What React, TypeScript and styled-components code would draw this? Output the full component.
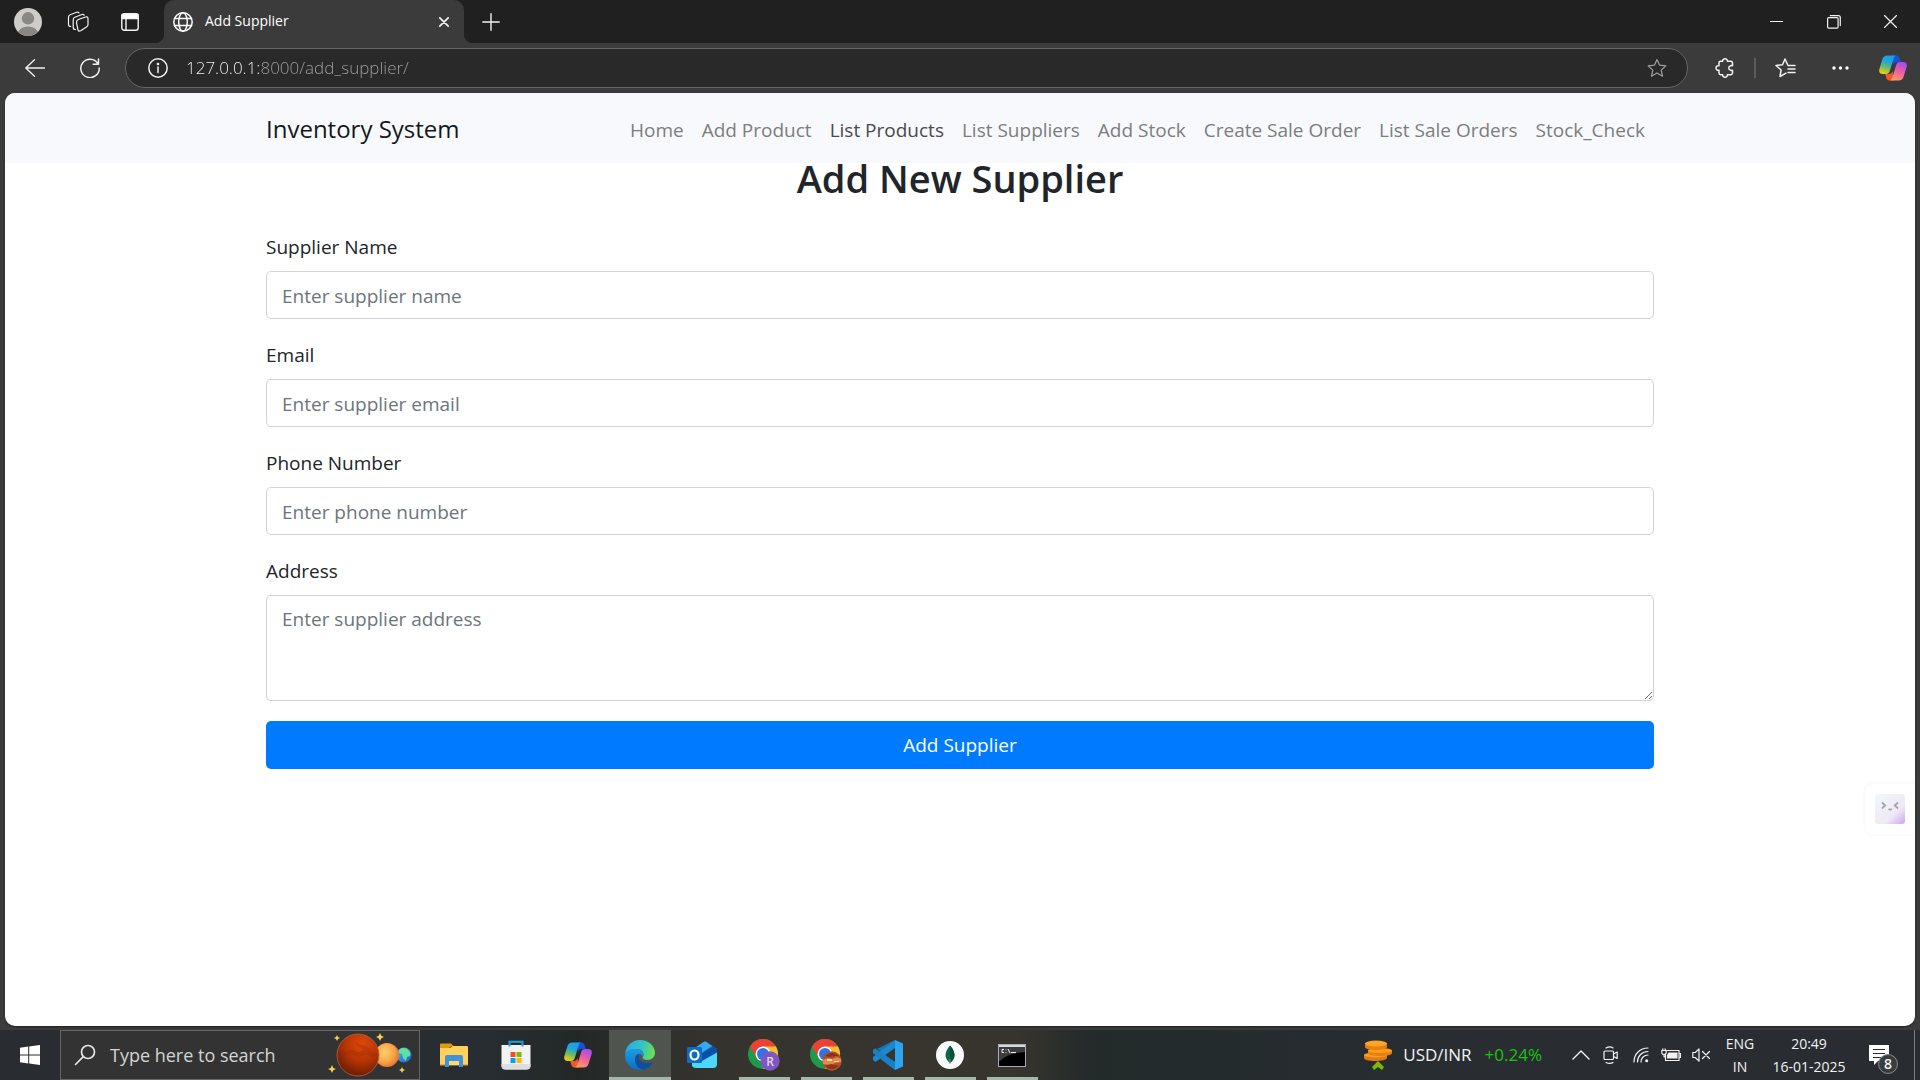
import React from "react";
import styled, { createGlobalStyle, css } from "styled-components";

const GlobalStyle = createGlobalStyle`
  *, *::before, *::after { box-sizing: border-box; }
  body {
    margin: 0;
    background: #3b3b3b;
    font-family: "Open Sans", "Noto Sans", sans-serif;
  }
  button, input, textarea { font-family: inherit; }
`;

/* ---------- window shell ---------- */

const Desktop = styled.div`
  min-height: 100vh;
  display: flex;
  flex-direction: column;
`;

const iconButton = css`
  display: inline-flex;
  align-items: center;
  justify-content: center;
  flex: none;
  padding: 0;
  border: 0;
  background: transparent;
  color: #f2f2f2;
  cursor: pointer;
  svg { display: block; }
`;

const TitleBar = styled.header`
  display: flex;
  align-items: stretch;
  height: 43px;
  background: #202020;
`;

const TitleButton = styled.button<{ $width: number; $after?: number }>`
  ${iconButton}
  width: ${(p) => p.$width}px;
  margin-right: ${(p) => p.$after ?? 0}px;
`;

const Tab = styled.div`
  position: relative;
  display: flex;
  align-items: center;
  width: 300px;
  padding: 0 10px 0 9px;
  border-radius: 10px 10px 0 0;
  background: #3b3b3b;
  color: #fff;
  &::before, &::after {
    content: "";
    position: absolute;
    bottom: 0;
    width: 10px;
    height: 10px;
  }
  &::before {
    left: -10px;
    background: radial-gradient(circle at 0 0, #202020 10px, #3b3b3b 11px);
  }
  &::after {
    right: -10px;
    background: radial-gradient(circle at 100% 0, #202020 10px, #3b3b3b 11px);
  }
`;

const TabTitle = styled.span`
  flex: 1;
  padding: 0 0 2px 12px;
  font-size: 14px;
  line-height: 20px;
`;

const TabClose = styled.button`
  ${iconButton}
  width: 20px;
  height: 20px;
`;

const NewTab = styled.button`
  ${iconButton}
  width: 44px;
  margin-left: 5px;
`;

const WindowControls = styled.div`
  display: flex;
  margin-left: auto;
  padding-right: 1px;
`;

const Toolbar = styled.div`
  display: flex;
  align-items: center;
  height: 50px;
  padding: 0 5px 0 13px;
`;

const ToolButton = styled.button<{ $after?: number }>`
  ${iconButton}
  width: 44px;
  height: 40px;
  margin-right: ${(p) => p.$after ?? 0}px;
`;

const AddressBar = styled.div`
  display: flex;
  flex: 1;
  align-items: center;
  height: 40px;
  margin-right: 15px;
  padding: 0 8px 0 10px;
  border: 1px solid #666;
  border-radius: 20px;
  background: #292929;
`;

const AddressInput = styled.input`
  flex: 1;
  min-width: 0;
  height: 30px;
  padding: 0 0 2px;
  border: 0;
  outline: 0;
  font-size: 17px;
  font-weight: 300;
  color: #a3a3a3;
  background: linear-gradient(90deg, #fff 73px, #a3a3a3 73px);
  background-clip: text;
  -webkit-background-clip: text;
  -webkit-text-fill-color: transparent;
`;

const ToolDivider = styled.span`
  width: 2px;
  height: 20px;
  margin: 0 7px;
  background: #5c5c5c;
`;

/* ---------- web page ---------- */

const Page = styled.div`
  position: relative;
  flex: 1;
  margin: 0 5px 4px;
  border-radius: 10px;
  overflow: hidden;
  background: #fff;
  box-shadow: 0 1px 2px rgba(0, 0, 0, 0.5);
`;

const Navbar = styled.nav`
  background: #f8f9fc;
`;

const Container = styled.div`
  width: 100%;
  max-width: 1428px;
  margin: 0 auto;
  padding: 0 20px;
`;

const NavInner = styled(Container)`
  display: flex;
  align-items: center;
  justify-content: space-between;
  min-height: 70px;
`;

const Brand = styled.a`
  padding-top: 2px;
  font-size: 24px;
  line-height: 36px;
  color: #16181b;
  text-decoration: none;
`;

const NavLinks = styled.ul`
  display: flex;
  margin: 0;
  padding: 3px 0 0;
  list-style: none;
`;

const NavLink = styled.a<{ $active?: boolean }>`
  display: block;
  padding: 0 9px;
  font-size: 19px;
  line-height: 30px;
  white-space: nowrap;
  text-decoration: none;
  color: ${(p) => (p.$active ? "#4a4a4b" : "#7c7d7e")};
`;

const Heading = styled.h1`
  margin: 0 0 38px;
  font-size: 38px;
  font-weight: 600;
  line-height: 30px;
  text-align: center;
  color: #212529;
  padding: 0;
`;

const Field = styled.div`
  display: flex;
  flex-direction: column;
  margin-bottom: 20px;
`;

const Label = styled.label`
  margin-bottom: 8px;
  font-size: 19px;
  line-height: 32px;
  color: #212529;
`;

const control = css`
  display: block;
  width: 100%;
  padding: 9px 15px 7px;
  border: 1px solid #ced4da;
  border-radius: 5px;
  outline: 0;
  background: #fff;
  font-size: 19px;
  line-height: 30px;
  color: #495057;
  &::placeholder { color: #6c757d; opacity: 1; }
`;

const TextInput = styled.input`
  ${control}
  height: 48px;
`;

const TextArea = styled.textarea`
  ${control}
  height: 106px;
  padding-top: 8px;
  resize: vertical;
`;

const Submit = styled.button`
  display: block;
  width: 100%;
  height: 48px;
  padding: 0;
  border: 0;
  border-radius: 5px;
  background: #007bff;
  color: #fff;
  font-size: 19px;
  line-height: 30px;
  cursor: pointer;
`;

const Assistant = styled.button`
  ${iconButton}
  position: absolute;
  right: 0;
  bottom: 192px;
  width: 50px;
  height: 50px;
  border-radius: 8px 0 0 8px;
  background: #fff;
  box-shadow: 0 0 4px rgba(0, 0, 0, 0.06);
`;

/* ---------- taskbar ---------- */

const Taskbar = styled.footer`
  display: flex;
  align-items: stretch;
  height: 50px;
  background: linear-gradient(
    90deg,
    #292d32 0, #282d32 25%, #232827 30%, #35332e 37%,
    #38352f 48%, #37342e 53%, #222a2a 57%, #262c2f 68%, #292d32 78%
  );
  color: #f2f2f2;
`;

const StartButton = styled.button`
  ${iconButton}
  width: 60px;
`;

const SearchBox = styled.label`
  display: flex;
  align-items: center;
  width: 360px;
  padding: 0 7px 0 13px;
  border: 1px solid #666;
  background: #333;
`;

const SearchInput = styled.input`
  flex: 1;
  min-width: 0;
  padding: 0 0 0 14px;
  border: 0;
  outline: 0;
  background: transparent;
  color: #d8d8d8;
  font-size: 18px;
  line-height: 24px;
  &::placeholder { color: #d4d4d4; opacity: 1; }
`;

const Apps = styled.div`
  display: flex;
  margin-left: 3px;
`;

const AppButton = styled.button<{ $running?: boolean; $active?: boolean }>`
  ${iconButton}
  position: relative;
  width: 62px;
  background: ${(p) => (p.$active ? "#50544f" : "transparent")};
  &::after {
    content: "";
    display: ${(p) => (p.$running || p.$active ? "block" : "none")};
    position: absolute;
    left: ${(p) => (p.$active ? 0 : 6)}px;
    right: ${(p) => (p.$active ? 0 : 5)}px;
    bottom: 0;
    height: 3px;
    background: #a3b8a8;
  }
`;

const Tray = styled.div`
  display: flex;
  align-items: center;
  margin-left: auto;
`;

const Rates = styled.button`
  ${iconButton}
  height: 50px;
  margin-right: 24px;
  font-size: 17px;
  line-height: 24px;
`;

const RateName = styled.span`
  margin: 0 13px 0 11px;
`;

const RateChange = styled.span`
  color: #16c60c;
`;

const TrayButton = styled.button`
  ${iconButton}
  width: 30px;
  height: 50px;
`;

const TrayText = styled.button<{ $width: number }>`
  ${iconButton}
  flex-direction: column;
  width: ${(p) => p.$width}px;
  height: 50px;
  font-size: 14px;
  line-height: 23px;
`;

const NoticeButton = styled.button`
  ${iconButton}
  position: relative;
  justify-content: flex-start;
  width: 60px;
  height: 50px;
  padding-left: 15px;
`;

const Badge = styled.span`
  position: absolute;
  left: 24px;
  top: 24px;
  width: 20px;
  height: 20px;
  border: 1px solid #8a8a8a;
  border-radius: 50%;
  background: #3a3d40;
  font-size: 14px;
  font-weight: 600;
  line-height: 18px;
  text-align: center;
`;

const ShowDesktop = styled.button`
  align-self: stretch;
  width: 6px;
  padding: 0;
  border: 0;
  border-left: 1px solid #7b7d7f;
  background: transparent;
`;

/* ---------- drawings ---------- */

const Line: React.FC<{
  w: number; h?: number; sw?: number; color?: string; children: React.ReactNode;
}> = ({ w, h = w, sw = 1.4, color = "currentColor", children }) => (
  <svg width={w} height={h} viewBox={`0 0 ${w} ${h}`} fill="none" stroke={color}
    strokeWidth={sw} strokeLinecap="round" strokeLinejoin="round" aria-hidden="true">
    {children}
  </svg>
);

const Avatar = () => (
  <svg width="28" height="28" viewBox="0 0 28 28" aria-hidden="true">
    <defs><clipPath id="av"><circle cx="14" cy="14" r="14" /></clipPath></defs>
    <g clipPath="url(#av)">
      <rect width="28" height="28" fill="#cfcdca" />
      <circle cx="14" cy="10.3" r="6.2" fill="#8b8785" />
      <path d="M3.500 28c0-6 4-9.600 10.500-9.600S24.500 22 24.500 28z" fill="#8b8785" />
    </g>
  </svg>
);

const Workspaces = () => (
  <Line w={22} h={22} sw={1.2}>
    <path d="M11.300 8.500 18.500 6c1.500-.5 2.500.2 2.500 1.700v5.800c0 1.200-.5 2-1.600 2.500l-5.700 3.700c-1.600.8-2.900.2-2.900-1.600l-1.300-6.600c-.2-1.500.5-2.500 1.800-3z" />
    <path d="M8.500 18.500c-1.500 0-2.300-.7-2.300-2V8.700c0-1.200.5-2 1.600-2.500l7.200-2.700c1-.3 1.700 0 2.200.7" />
    <path d="M3.700 15.500c-1.500 0-2.200-.7-2.200-2V6.200c0-1.200.5-2 1.600-2.500L9.800 1.200c1-.3 1.700 0 2.200.7" />
  </Line>
);

const TabActions = () => (
  <Line w={18} h={18}>
    <rect x=".8" y=".8" width="16.400" height="16.400" rx="2.500" />
    <path d="M1 1.500h16v4H1z" fill="#fff" />
    <path d="M5 6v11" />
  </Line>
);

const Globe = () => (
  <Line w={20} h={20} sw={1.5}>
    <circle cx="10" cy="10" r="9.200" />
    <ellipse cx="10" cy="10" rx="4.300" ry="9.200" />
    <path d="M1.500 6.500h17M1.500 13.500h17" />
  </Line>
);

const Copilot: React.FC<{ id: string }> = ({ id }) => (
  <svg width="28" height="26" viewBox="0 0 28 26" aria-hidden="true">
    <defs>
      <linearGradient id={`${id}a`} x1=".6" y1="0" x2=".3" y2="1">
        <stop offset="0" stopColor="#1a9cf0" /><stop offset=".35" stopColor="#22a6d8" />
        <stop offset=".65" stopColor="#6dbb62" /><stop offset="1" stopColor="#f3d108" />
      </linearGradient>
      <linearGradient id={`${id}b`} x1=".7" y1="0" x2=".3" y2="1">
        <stop offset="0" stopColor="#a04df0" /><stop offset=".45" stopColor="#e95aa8" />
        <stop offset="1" stopColor="#ff9a62" />
      </linearGradient>
    </defs>
    <path d="M13 .5h4.500c1.800 0 2.700 1.100 3.200 2.800L21.800 7H18c-2 0-3 1-3.600 3z" fill="#1b4fd6" />
    <path d="M15 25.500h-4.500c-1.800 0-2.700-1.100-3.200-2.800L6.200 19H10c2 0 3-1 3.600-3z" fill="#f0592b" />
    <path d="M8.500.5h8.300c-1.400.8-1.900 2-2.500 4l-3.600 11.800C10.100 18.300 9 19 7 19H4c-3 0-4.500-1.700-3.600-5L3.300 4.600C4.100 2 5.600.5 8.500.5z" fill={`url(#${id}a)`} />
    <path d="M19.500 25.500h-8.300c1.400-.8 1.900-2 2.500-4l3.600-11.800C17.900 7.700 19 7 21 7h3c3 0 4.500 1.700 3.600 5l-2.900 9.400c-.8 2.600-2.300 4.100-5.200 4.100z" fill={`url(#${id}b)`} />
  </svg>
);

const starPath = "M10 1.500l2.600 5.700 6.200.7-4.600 4.200 1.300 6.100L10 15.100l-5.500 3.100 1.300-6.100L1.200 7.900l6.200-.7z";

const Planets = () => (
  <svg width="84" height="46" viewBox="0 0 84 46" aria-hidden="true">
    <defs>
      <radialGradient id="mars" cx=".6" cy=".25" r=".8">
        <stop offset="0" stopColor="#e04a08" /><stop offset=".5" stopColor="#b63403" /><stop offset="1" stopColor="#611b05" />
      </radialGradient>
      <radialGradient id="venus" cx=".4" cy=".4" r=".65">
        <stop offset="0" stopColor="#ffd06a" /><stop offset=".6" stopColor="#fba449" /><stop offset="1" stopColor="#e8702a" />
      </radialGradient>
      <linearGradient id="earth" x1="0" y1="0" x2="1" y2="1">
        <stop offset="0" stopColor="#4cc2f6" /><stop offset="1" stopColor="#1c57c8" />
      </linearGradient>
    </defs>
    <circle cx="76" cy="23" r="7.500" fill="url(#earth)" />
    <path d="M71 18c3-3 8-2 9 0 2 1 3 4 2 6l-3 1-1 4-3-3-1-4-3-1z" fill="#5ee0a0" />
    <circle cx="59" cy="23" r="12" fill="url(#venus)" />
    <circle cx="30" cy="23" r="21" fill="url(#mars)" stroke="#b6653c" strokeWidth=".8" />
    <path d="M28 4c-3 6 1 9 7 9 7 1 6 8 14 9-1 3-4 4-8 2-5-3-8 2-13 0-5-3-9-2-14 2 3-8 8-9 13-7 4 2 7 1 8-2-5-1-10-6-7-13z" fill="#8f2a05" opacity=".3" />
    <g fill="#f7cf52">
      <path d="M9 3l1 2 2 1-2 1-1 2-1-2-2-1 2-1zM52 1l1.300 2.700L56 5l-2.700 1.300L52 9l-1.300-2.700L48 5l2.700-1.300zM4 33l1.300 2.900L8 37l-2.700 1.300L4 41l-1.300-2.700L0 37l2.700-1.100zM74 35l1 2 2 1-2 1-1 2-1-2-2-1 2-1z" />
    </g>
  </svg>
);

const Folder = () => (
  <svg width="28" height="24" viewBox="0 0 28 24" aria-hidden="true">
    <path d="M0 1.500Q0 .5 1 .5h10l3 3h-3L9 5H0z" fill="#e09b07" />
    <path d="M0 5h10l3-2h14q1 0 1 1v17q0 1-1 1H0z" fill="#ffd05c" />
    <path d="M0 21h28v1.500H0z" fill="#e9ad35" />
    <path d="M5 24V14q0-2 2-2h14q2 0 2 2v10h-4v-6H9v6z" fill="#3e93d9" />
    <path d="M9 18h10v4H9z" fill="#ffd97a" />
  </svg>
);

const Store = () => (
  <svg width="30" height="30" viewBox="0 0 30 30" aria-hidden="true">
    <path d="M8.500 6V1.800h13V6" fill="none" stroke="#1da1dc" strokeWidth="2" />
    <path d="M.5 5h29v20.500q0 4-4 4h-21q-4 0-4-4z" fill="#f2f2f2" />
    <path d="M.5 24v1.500q0 4 4 4h21q4 0 4-4V24z" fill="#dedede" />
    <path d="M9.500 12h5v5h-5z" fill="#f25022" /><path d="M15.500 12h5v5h-5z" fill="#7fba00" />
    <path d="M9.500 18h5v5h-5z" fill="#00a4ef" /><path d="M15.500 18h5v5h-5z" fill="#ffb900" />
    <path d="M8.500 5v1.500M21.500 5v1.500" stroke="#1da1dc" strokeWidth="2" />
  </svg>
);

const Edge = () => (
  <svg width="30" height="30" viewBox="0 0 30 30" aria-hidden="true">
    <defs>
      <linearGradient id="eg" x1="0" y1=".3" x2="1" y2=".5">
        <stop offset="0" stopColor="#28a7e8" /><stop offset=".55" stopColor="#32c5c8" /><stop offset="1" stopColor="#6be04c" />
      </linearGradient>
      <linearGradient id="eb" x1="0" y1="0" x2="0" y2="1">
        <stop offset="0" stopColor="#1b9de2" /><stop offset="1" stopColor="#0b6fc9" />
      </linearGradient>
    </defs>
    <path d="M.2 13.500C1 5.800 7.200 0 15 0c8.500 0 15 6 15 12.800 0 4.400-3.400 7.200-7.600 7.200-3 0-4.900-1-4.900-2.200 0-.8 1-1.200 1-3.300 0-2.800-2.500-5.600-7-5.600C6.500 8.900 2.200 11 .2 13.500z" fill="url(#eg)" />
    <path d="M.2 13.500C2 11 5.500 8.900 10.500 8.900c5 0 8 2.800 8 5.600 0 1-.4 1.800-.7 2.300-1-2-2.500-3-4.300-3C11 15 10 17.500 10 20c0 5 4 9 8.500 9.600-1.100.3-2.300.4-3.500.4C6.500 30 0 23.500 0 15z" fill="url(#eb)" />
    <path d="M13.500 13.800C11 15 10 17.500 10 20c0 5 4 9 8.500 9.600 4-.9 7-3.400 9-6.600.3-.6-.2-1-.8-.7-6 2.700-13.200-.3-13.200-5.500 0-1.300.4-2.200 0-3z" fill="#0d4f9e" />
  </svg>
);

const Outlook = () => (
  <svg width="30" height="28" viewBox="0 0 30 28" aria-hidden="true">
    <path d="M4 10 16.500 1q1.500-1 3 0L30 8v14H4z" fill="#1277c9" />
    <path d="M5 9 16.500 1q1.500-1 3 0L25 5 14 12z" fill="#3aa6ec" />
    <path d="M5 21 30 10v13q0 4-4 4H9q-3 0-4-2z" fill="#4bd8fb" />
    <path d="M15 12.500 26 5.500 30 8.500v3L15 20z" fill="#0a4fa8" />
    <rect x="0" y="6" width="15" height="16" rx="1.500" fill="#0f6cc4" />
    <ellipse cx="7.500" cy="14" rx="4" ry="4.500" fill="none" stroke="#fff" strokeWidth="2.200" />
  </svg>
);

const Chrome: React.FC<{ children: React.ReactNode }> = ({ children }) => (
  <svg width="32" height="32" viewBox="0 0 32 32" aria-hidden="true">
    <circle cx="15" cy="15" r="15" fill="#1f9a4a" />
    <path d="M15 15 2 7.500A15 15 0 0 1 28 7.500z" fill="#ea4335" />
    <path d="M15 7.500h13A15 15 0 0 1 15 30l6.500-11.200z" fill="#fbc02d" />
    <path d="M2 7.500 8.500 18.800 15 15V7.500z" fill="#ea4335" />
    <circle cx="15" cy="15" r="7.500" fill="#fff" />
    <circle cx="15" cy="15" r="6" fill="#2f74e6" />
    {children}
  </svg>
);

const ProfileR = () => (
  <Chrome>
    <circle cx="22" cy="22" r="9.700" fill="#7e57c2" />
    <text x="22" y="26.500" textAnchor="middle" fontSize="12" fontWeight="600" fill="#e4d8f5" fontFamily="Open Sans, sans-serif">R</text>
  </Chrome>
);

const ProfilePhoto = () => (
  <Chrome>
    <circle cx="22" cy="22" r="9.700" fill="#b0512a" />
    <path d="M15 17q3-3 7-3t7 3l-4 0-5 1z" fill="#8a3218" />
    <path d="M13 21l5-2 4 1 5-2 4 2v3l-6 1-4 2-8-1z" fill="#e58a4c" />
    <path d="M15 27l6-2 8 2-5 3h-4z" fill="#8d3417" />
    <path d="M17 20h5v2h-5zM24 22h5v1h-5z" fill="#f6d9a8" />
  </Chrome>
);

const VsCode = () => (
  <svg width="30" height="30" viewBox="0 0 30 30" aria-hidden="true">
    <path d="M22 0 8 13 2.500 8.500 0 10v3l22 17v-8L4 9z" fill="#1177bb" />
    <path d="M0 20l2.500 2L22 8V0L0 17z" fill="#1b88d0" />
    <path d="M0 10l2-1.500L22 22v8L0 13z" fill="#1b7fc6" />
    <path d="M22 0l8 3.500v23L22 30z" fill="#2ba4f2" />
  </svg>
);

const Mongo = () => (
  <svg width="28" height="28" viewBox="0 0 28 28" aria-hidden="true">
    <circle cx="14" cy="14" r="14" fill="#fafafa" />
    <path d="M14 4.500c6 7 6 13 0 17.500-6-4.500-6-10.500 0-17.500z" fill="#06694b" />
    <path d="M14 4.500c6 7 6 13 0 17.500z" fill="#0b5138" />
    <path d="M14 18v5" stroke="#6aa68c" />
  </svg>
);

const Terminal = () => (
  <svg width="28" height="23" viewBox="0 0 28 23" aria-hidden="true">
    <rect x=".5" y=".5" width="27" height="22" fill="#000" stroke="#a9adb3" />
    <path d="M1 1h26v2H1z" fill="#d5d9e2" />
    <path d="M1 3h26v5Q10 9 2 17H1z" fill="#3c3c3c" />
    <path d="M6 5.500H4v3h2M8 5.500v.8M8 8v.8M10 5l2 4M13 8.500h5" stroke="#f0f0f0" fill="none" />
  </svg>
);

const Coins = () => (
  <svg width="28" height="30" viewBox="0 0 28 30" aria-hidden="true">
    <path d="M0 15v3c0 2 5 3 11 3s12-1 12-3v-3z" fill="#e07a12" />
    <ellipse cx="11.500" cy="15" rx="11.500" ry="2.500" fill="#ff9c1c" />
    <path d="M4 10v3c0 2 5 3 12 3s12-1 12-3v-3z" fill="#e8800f" />
    <ellipse cx="16" cy="10.500" rx="12" ry="2.500" fill="#ff9c1c" />
    <path d="M1 3v4c0 2 5 3 11 3s11-1 11-3V3z" fill="#e8800f" />
    <ellipse cx="12" cy="3.500" rx="11" ry="3" fill="#ffa32a" />
    <path d="M14 21l6 6-2 3-4-3-4 3-2-3z" fill="#7fba00" />
  </svg>
);

const navItems = [
  "Home", "Add Product", "List Products", "List Suppliers",
  "Add Stock", "Create Sale Order", "List Sale Orders", "Stock_Check",
];

const fields = [
  { id: "name", label: "Supplier Name", type: "text", hint: "Enter supplier name" },
  { id: "email", label: "Email", type: "email", hint: "Enter supplier email" },
  { id: "phone", label: "Phone Number", type: "tel", hint: "Enter phone number" },
];

const apps: { name: string; icon: React.ReactNode; running?: boolean; active?: boolean }[] = [
  { name: "File Explorer", icon: <Folder /> },
  { name: "Microsoft Store", icon: <Store /> },
  { name: "Copilot", icon: <Copilot id="tb" /> },
  { name: "Microsoft Edge", icon: <Edge />, active: true },
  { name: "Outlook", icon: <Outlook /> },
  { name: "Chrome, first profile", icon: <ProfileR />, running: true },
  { name: "Chrome, second profile", icon: <ProfilePhoto />, running: true },
  { name: "Visual Studio Code", icon: <VsCode />, running: true },
  { name: "MongoDB Compass", icon: <Mongo />, running: true },
  { name: "Command Prompt", icon: <Terminal />, running: true },
];

export default function App() {
  return (
    <Desktop>
      <GlobalStyle />
      <TitleBar>
        <TitleButton $width={56} aria-label="Profile"><Avatar /></TitleButton>
        <TitleButton $width={44} $after={8} aria-label="Workspaces"><Workspaces /></TitleButton>
        <TitleButton $width={44} $after={12} aria-label="Tab actions"><TabActions /></TitleButton>
        <Tab>
          <Globe />
          <TabTitle>Add Supplier</TabTitle>
          <TabClose aria-label="Close tab"><Line w={10} sw={1.7}><path d="M.8.8l8.400 8.400M9.200.8.8 9.200" /></Line></TabClose>
        </Tab>
        <NewTab aria-label="New tab"><Line w={18}><path d="M9 .8v16.400M.8 9h16.400" /></Line></NewTab>
        <WindowControls>
          <TitleButton $width={57} aria-label="Minimize"><Line w={13} h={2} sw={1}><path d="M.5.5h12" /></Line></TitleButton>
          <TitleButton $width={57} aria-label="Restore">
            <Line w={14} sw={1.2}><rect x=".6" y="2.600" width="10.500" height="10.500" rx="1.200" /><path d="M3.300.6h8q2 0 2 2v8" /></Line>
          </TitleButton>
          <TitleButton $width={57} aria-label="Close"><Line w={13} sw={1.2}><path d="M.5.5l12 12M12.500.5l-12 12" /></Line></TitleButton>
        </WindowControls>
      </TitleBar>

      <Toolbar>
        <ToolButton $after={11} aria-label="Back"><Line w={20} h={18}><path d="M9.500.8.8 9l8.700 8.200M1 9h18.400" /></Line></ToolButton>
        <ToolButton $after={13} aria-label="Refresh">
          <Line w={20} h={20} sw={1.5}><path d="M17.800 5.500A9.200 9.200 0 1 0 19.200 10M18.500 1v5.200h-5.300" /></Line>
        </ToolButton>
        <AddressBar>
          <ToolButton $after={6} aria-label="Site information">
            <Line w={20} h={20} sw={1.5}><circle cx="10" cy="10" r="9.200" /><path d="M10 9v5.500" /><circle cx="10" cy="6" r=".6" fill="currentColor" /></Line>
          </ToolButton>
          <AddressInput aria-label="Address" defaultValue="127.0.0.1:8000/add_supplier/" />
          <ToolButton aria-label="Add to favorites"><Line w={20} h={20} sw={1.2} color="#a0a0a0"><path d={starPath} /></Line></ToolButton>
        </AddressBar>
        <ToolButton aria-label="Extensions">
          <Line w={20} h={20} sw={1.5}>
            <path d="M5.700 3.200h2C7.500 1.700 8.500.8 10 .8s2.500.9 2.300 2.400h3.500q1.700 0 1.700 1.700v2.800c-2-.4-3.700.5-3.700 2.300s1.700 2.700 3.700 2.300v2.800q0 1.700-1.700 1.700h-3.500c.2 1.500-.8 2.400-2.300 2.400s-2.500-.9-2.300-2.400h-2Q4 16.800 4 15.100v-2.800c-1.800.2-3-.8-3-2.300s1.200-2.500 3-2.300V4.900q0-1.700 1.700-1.700z" />
          </Line>
        </ToolButton>
        <ToolDivider />
        <ToolButton $after={11} aria-label="Favorites">
          <Line w={21} h={20} sw={1.5}>
            <path d="M11 15.200l-6 3.300L6.100 12 1 7.500l6.500-.8L10 1l2.500 5.500M13 7.500h7M13 11h7M13 14.500h7" />
          </Line>
        </ToolButton>
        <ToolButton $after={9} aria-label="Settings and more">
          <svg width="17" height="4" viewBox="0 0 17 4" fill="#fff" aria-hidden="true"><circle cx="2" cy="2" r="1.700" /><circle cx="8.500" cy="2" r="1.700" /><circle cx="15" cy="2" r="1.700" /></svg>
        </ToolButton>
        <ToolButton aria-label="Copilot"><Copilot id="tool" /></ToolButton>
      </Toolbar>

      <Page>
        <Navbar>
          <NavInner>
            <Brand href="#">Inventory System</Brand>
            <NavLinks>
              {navItems.map((item) => (
                <li key={item}><NavLink href="#" $active={item === "List Products"}>{item}</NavLink></li>
              ))}
            </NavLinks>
          </NavInner>
        </Navbar>
        <Container as="main">
          <Heading>Add New Supplier</Heading>
          <form onSubmit={(e) => e.preventDefault()}>
            {fields.map((f) => (
              <Field key={f.id}>
                <Label htmlFor={f.id}>{f.label}</Label>
                <TextInput id={f.id} type={f.type} placeholder={f.hint} />
              </Field>
            ))}
            <Field>
              <Label htmlFor="address">Address</Label>
              <TextArea id="address" placeholder="Enter supplier address" />
            </Field>
            <Submit type="submit">Add Supplier</Submit>
          </form>
        </Container>
        <Assistant aria-label="Assistant">
          <svg width="30" height="30" viewBox="0 0 30 30" aria-hidden="true">
            <defs>
              <linearGradient id="face" x1=".2" y1=".1" x2="1" y2="1">
                <stop offset="0" stopColor="#f1f4f8" /><stop offset=".6" stopColor="#efe9f6" /><stop offset="1" stopColor="#cda6ea" />
              </linearGradient>
            </defs>
            <rect width="30" height="30" rx="3" fill="url(#face)" />
            <path d="M7 8.500l3.200 3L7 14.500M23 8.500l-3.200 3 3.200 3M13.500 15q1.700 1.200 3.400 0" fill="none" stroke="#a3a6ae" strokeWidth="1.800" />
          </svg>
        </Assistant>
      </Page>

      <Taskbar>
        <StartButton aria-label="Start">
          <svg width="20" height="20" viewBox="0 0 20 20" fill="#fff" aria-hidden="true">
            <path d="M0 2.800 8.200 1.600v7.900H0zM9.200 1.400 20 0v9.500H9.200zM0 10.500h8.200v7.900L0 17.200zM9.200 10.500H20V20L9.200 18.600z" />
          </svg>
        </StartButton>
        <SearchBox>
          <Line w={22} h={22} sw={1.7} color="#e6e6e6"><circle cx="14" cy="8" r="6.500" /><path d="M9.300 12.700 1.500 20.500" /></Line>
          <SearchInput type="search" aria-label="Search" placeholder="Type here to search" />
          <Planets />
        </SearchBox>
        <Apps>
          {apps.map((a) => (
            <AppButton key={a.name} aria-label={a.name} $running={a.running} $active={a.active}>{a.icon}</AppButton>
          ))}
        </Apps>
        <Tray>
          <Rates>
            <Coins />
            <RateName>USD/INR</RateName>
            <RateChange>+0.24%</RateChange>
          </Rates>
          <TrayButton aria-label="Show hidden icons"><Line w={18} h={10}><path d="M1 9l8-8 8 8" /></Line></TrayButton>
          <TrayButton aria-label="Meet now">
            <Line w={16} h={18} sw={1.2}><rect x="1" y="5" width="9.500" height="8.500" rx="1" /><path d="M10.500 8l3.700-2v6.500l-3.700-2M3 2q4-2.200 7 0M3 16.500q4 1.800 7 0" /></Line>
          </TrayButton>
          <TrayButton aria-label="Network">
            <Line w={16} h={16} sw={1.2}>
              <path d="M1 15C1 7 7 1 15 1M4.500 15C4.500 9 9 4.500 15 4.500M8 15c0-4 3-7 7-7" />
              <circle cx="13.700" cy="13.700" r="1.500" fill="currentColor" stroke="none" />
            </Line>
          </TrayButton>
          <TrayButton aria-label="Battery">
            <Line w={20} h={14} sw={1.2}>
              <path d="M6 2.500h12v10H4.500V7M18.500 5.500h1v4h-1M.8 2.500h4.400v2q0 2-2.200 2t-2.200-2zM1.800 2.500V.8M4.200 2.500V.8M3 6.500v2.300h1.500" />
              <path d="M7.500 4.500h9v6H6V7z" fill="currentColor" stroke="none" />
            </Line>
          </TrayButton>
          <TrayButton aria-label="Volume, muted">
            <Line w={18} h={14} sw={1.2}><path d="M.8 4.500h2.500L7 .8v12.400L3.300 9.500H.8zM10.500 3.500l7 7M17.500 3.500l-7 7" /></Line>
          </TrayButton>
          <TrayText $width={48}><span>ENG</span><span>IN</span></TrayText>
          <TrayText $width={90}><span>20:49</span><span>16-01-2025</span></TrayText>
          <NoticeButton aria-label="8 notifications">
            <svg width="20" height="20" viewBox="0 0 20 20" aria-hidden="true">
              <path d="M0 0h20v16H9l-4 4v-4H0z" fill="#fff" />
              <path d="M4 4.500h12M4 8.500h12M4 12.500h8" stroke="#292d32" />
            </svg>
            <Badge>8</Badge>
          </NoticeButton>
          <ShowDesktop aria-label="Show desktop" />
        </Tray>
      </Taskbar>
    </Desktop>
  );
}
